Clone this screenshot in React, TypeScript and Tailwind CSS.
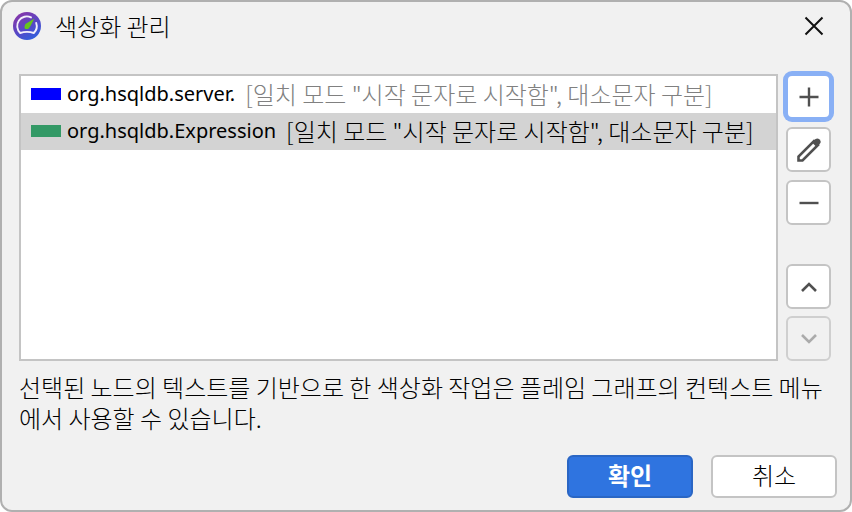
import { useState } from 'react';
import type { ReactNode } from 'react';
import clsx from 'clsx';

type Colorization = {
  pattern: string;
  mode: string;
  swatch: string;
};

const colorizations: Colorization[] = [
  {
    pattern: 'org.hsqldb.server.',
    mode: '[일치 모드 "시작 문자로 시작함", 대소문자 구분]',
    swatch: 'bg-[#0000ff]',
  },
  {
    pattern: 'org.hsqldb.Expression',
    mode: '[일치 모드 "시작 문자로 시작함", 대소문자 구분]',
    swatch: 'bg-[#339966]',
  },
];

function AppLogo() {
  return (
    <svg width="28" height="28" viewBox="0 0 28 28" aria-hidden="true">
      <defs>
        <linearGradient id="logo" x1="0.2" y1="0" x2="0.8" y2="1">
          <stop offset="0" stopColor="#8a35a8" />
          <stop offset="0.5" stopColor="#5a46c4" />
          <stop offset="1" stopColor="#2c62e0" />
        </linearGradient>
      </defs>
      <circle cx="14" cy="14" r="14" fill="url(#logo)" />
      <path
        d="M18 5.4A9.6 9.6 0 0 0 7.2 21Q14 18.8 20.8 21A9.6 9.6 0 0 0 23.2 11"
        fill="none"
        stroke="#f4f0fb"
        strokeWidth="1.9"
        strokeLinecap="round"
        strokeLinejoin="round"
      />
      <path d="M21.4 6.4L12.4 12Q10.4 16.2 12.6 17Q15.6 17.6 17.2 14.4Z" fill="#66c41c" />
    </svg>
  );
}

function ToolButton({
  label,
  focused,
  disabled,
  onClick,
  children,
}: {
  label: string;
  focused?: boolean;
  disabled?: boolean;
  onClick?: () => void;
  children: ReactNode;
}) {
  return (
    <button
      type="button"
      aria-label={label}
      disabled={disabled}
      onClick={onClick}
      className={clsx(
        'flex size-[45px] items-center justify-center rounded-md border-2 outline-none',
        focused && 'border-[#89b0f5] bg-white ring-3 ring-[#89b0f5]',
        !focused && !disabled && 'border-[#c4c4c4] bg-white',
        disabled ? 'border-[#cfcfcf] text-[#ababab]' : 'text-[#505050]'
      )}
    >
      {children}
    </button>
  );
}

export default function App() {
  const [selected, setSelected] = useState(1);

  return (
    <div className="min-h-screen bg-white font-['Noto_Sans_CJK_KR',sans-serif] text-2xl font-light text-black">
      <div
        role="dialog"
        aria-labelledby="title"
        className="flex min-h-screen flex-col rounded-xl border-2 border-[#b0b0b0] bg-[#f1f1f1]"
      >
        <header className="flex h-12 items-center pr-6 pl-[11px]">
          <AppLogo />
          <h1 id="title" className="ml-3.5 flex-1">
            색상화 관리
          </h1>
          <button type="button" aria-label="닫기" className="p-0.5">
            <svg width="20" height="20" viewBox="0 0 20 20" fill="none" stroke="#111" strokeWidth="2">
              <path d="M1.5 1.5L18.5 18.5M18.5 1.5L1.5 18.5" />
            </svg>
          </button>
        </header>

        <main className="flex flex-col pt-6 pl-[17px]">
          <div className="flex gap-2 pr-[19px]">
            <ul
              role="listbox"
              aria-label="색상화"
              className="flex-1 border-2 border-[#c4c4c4] bg-white"
            >
              {colorizations.map((item, index) => (
                <li
                  key={item.pattern}
                  role="option"
                  aria-selected={index === selected}
                  onClick={() => setSelected(index)}
                  className={clsx(
                    'flex h-[37px] items-center pb-px pl-2.5 whitespace-nowrap',
                    index === selected && 'bg-[#d3d3d3]'
                  )}
                >
                  <span className={clsx('mr-1.5 h-3 w-[30px]', item.swatch)} />
                  <span className="mr-2.5 font-['Noto_Sans',sans-serif] text-xl font-normal">
                    {item.pattern}
                  </span>
                  <span className={clsx(index !== selected && 'text-[#808080]')}>{item.mode}</span>
                </li>
              ))}
            </ul>

            <div className="flex flex-col gap-[39px]">
              <div className="flex flex-col gap-2">
                <ToolButton label="추가" focused>
                  <svg width="20" height="20" fill="none" stroke="currentColor" strokeWidth="2.4">
                    <path d="M10 0.5V19.5M0.5 10H19.5" />
                  </svg>
                </ToolButton>
                <ToolButton label="편집">
                  <svg width="24" height="24" viewBox="0 0 24 24" fill="none" stroke="currentColor">
                    <path d="M1.5 22.5V18.5L17 3L21 7L5.5 22.5Z" strokeWidth="2.6" />
                    <path
                      d="M15 4.5L18.5 1Q20.5 -0.4 22.6 1.4Q24.6 3.6 23 5.6L19.5 9Z"
                      fill="currentColor"
                      stroke="none"
                    />
                  </svg>
                </ToolButton>
                <ToolButton label="제거">
                  <svg width="20" height="20" fill="none" stroke="currentColor" strokeWidth="2.4">
                    <path d="M0.5 10H19.5" />
                  </svg>
                </ToolButton>
              </div>
              <div className="flex flex-col gap-[7px]">
                <ToolButton label="위로" onClick={() => setSelected(Math.max(0, selected - 1))}>
                  <svg width="16" height="10" fill="none" stroke="currentColor" strokeWidth="2.6">
                    <path d="M1 9L8 2L15 9" />
                  </svg>
                </ToolButton>
                <ToolButton label="아래로" disabled>
                  <svg width="16" height="10" fill="none" stroke="currentColor" strokeWidth="2.6">
                    <path d="M1 1L8 8L15 1" />
                  </svg>
                </ToolButton>
              </div>
            </div>
          </div>

          <p className="mt-2.5 mr-4 leading-[31px]">
            선택된 노드의 텍스트를 기반으로 한 색상화 작업은 플레임 그래프의 컨텍스트 메뉴에서 사용할
            수 있습니다.
          </p>
        </main>

        <footer className="mt-auto flex justify-end gap-[18px] pr-[13px] pb-3">
          <button
            type="button"
            className="h-[43px] w-[126px] rounded-md border-2 border-[#2a66c4] bg-[#2f74e0] pb-1 font-bold text-white"
          >
            확인
          </button>
          <button
            type="button"
            className="h-[43px] w-[126px] rounded-md border-2 border-[#c4c4c4] bg-white pb-1"
          >
            취소
          </button>
        </footer>
      </div>
    </div>
  );
}
